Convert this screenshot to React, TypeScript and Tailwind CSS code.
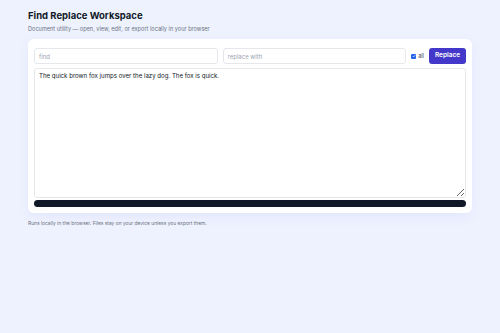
import React from "react";

export default function App() {
  return (
    <div className="min-h-screen w-full bg-[#eef2fe] px-[28px] pt-[10px]" style={{ fontFamily: "Inter, 'Noto Sans', sans-serif" }}>
      <h1 className="text-[9.5px] font-bold leading-[12px] text-[#111827]">Find Replace Workspace</h1>
      <p className="mt-[4px] text-[5.6px] leading-[7px] text-[#6b7280]">Document utility — open, view, edit, or export locally in your browser</p>
      <div className="mt-[6px] flex flex-col rounded-[6px] bg-white px-[6px] pb-[6px] pt-[9px] shadow-[0_4px_12px_rgba(99,102,241,0.08)]">
        <div className="flex items-center gap-[5px]">
          <input className="h-[16px] flex-1 rounded-[3px] border border-[#e5e7eb] px-[4px] text-[6px] text-[#111827] placeholder:text-[#9ca3af] outline-none" placeholder="find" />
          <input className="h-[16px] flex-1 rounded-[3px] border border-[#e5e7eb] px-[4px] text-[6px] text-[#111827] placeholder:text-[#9ca3af] outline-none" placeholder="replace with" />
          <label className="flex items-center gap-[2px] text-[5.5px] text-[#374151]">
            <span className="flex h-[5px] w-[5px] items-center justify-center rounded-[1px] bg-[#2563eb]">
              <svg viewBox="0 0 10 10" className="h-[4px] w-[4px]"><path d="M2 5.2 L4.2 7.4 L8 2.8" fill="none" stroke="white" strokeWidth="1.6" /></svg>
            </span>
            all
          </label>
          <button className="h-[16px] rounded-[3px] bg-[#4338ca] px-[6px] text-[6.5px] font-semibold text-white">Replace</button>
        </div>
        <textarea
          className="mt-[4px] block h-[130px] w-full resize-y rounded-[3px] border border-[#e5e7eb] px-[4px] py-[3px] text-[6.1px] leading-[8px] text-[#111827] outline-none"
          defaultValue="The quick brown fox jumps over the lazy dog. The fox is quick."
        />
        <div className="mt-[1.5px] h-[7.5px] w-full rounded-full bg-[#111827]" />
      </div>
      <p className="mt-[7px] text-[4.9px] text-[#6b7280]">Runs locally in the browser. Files stay on your device unless you export them.</p>
    </div>
  );
}
